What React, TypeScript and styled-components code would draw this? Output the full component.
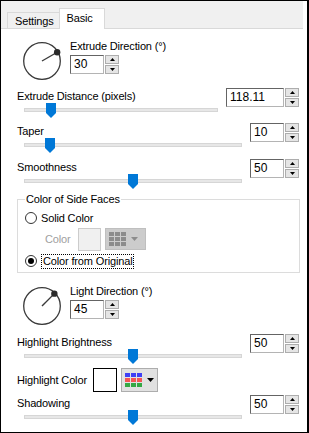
import React from 'react';
import styled, { createGlobalStyle } from 'styled-components';

const GlobalStyle = createGlobalStyle`
  html, body {
    margin: 0;
    padding: 0;
    background: #fff;
  }
  body {
    font-family: 'Liberation Sans', Arial, sans-serif;
    font-size: 11px;
    letter-spacing: -0.15px;
    color: #000;
  }
`;

const Window = styled.div`
  width: 309px;
  height: 433px;
  box-sizing: border-box;
  border: 1px solid #000;
  border-right-width: 2px;
  background: #fff;
  display: flex;
  flex-direction: column;
  overflow: hidden;
`;

const TabStrip = styled.div`
  height: 27px;
  margin-right: 4px;
  padding-left: 6px;
  background: #f0f0f0;
  border-bottom: 1px solid #d9d9d9;
  display: flex;
  align-items: flex-end;
`;

const Tab = styled.div<{ $active?: boolean }>`
  box-sizing: border-box;
  height: ${(p) => (p.$active ? 21 : 16)}px;
  margin-bottom: ${(p) => (p.$active ? -1 : 0)}px;
  padding: ${(p) => (p.$active ? '3px 11px 0 7px' : '2px 5px 0 7px')};
  background: ${(p) => (p.$active ? '#fff' : '#f0f0f0')};
  border: 1px solid #d9d9d9;
  border-bottom: none;
  border-right: ${(p) => (p.$active ? '1px solid #d9d9d9' : 'none')};
  line-height: 13px;
`;

const Panel = styled.div`
  flex: 1;
  display: flex;
  flex-direction: column;
  padding: 10px 8px 0 16px;
`;

const DialRow = styled.div<{ $top?: number }>`
  display: flex;
  align-items: flex-start;
  gap: 8px;
  margin-top: ${(p) => p.$top ?? 0}px;
`;

const DialSvg = styled.svg`
  margin: 2px 0 0 5px;
  flex: none;
`;

const DialColumn = styled.div`
  display: flex;
  flex-direction: column;
  gap: 2px;
`;

const Label = styled.div<{ $muted?: boolean }>`
  line-height: 14px;
  white-space: nowrap;
  color: ${(p) => (p.$muted ? '#a0a0a0' : '#000')};
`;

const ParamGrid = styled.div<{ $top?: number }>`
  display: grid;
  grid-template-columns: 1fr auto;
  grid-template-rows: 15px 16px;
  column-gap: 8px;
  margin-top: ${(p) => p.$top ?? 0}px;

  ${Label} {
    padding-top: 1px;
  }
`;

const SpinCell = styled.div`
  grid-column: 2;
  grid-row: 1 / 3;
  align-self: start;
`;

const SpinWrap = styled.div`
  display: flex;
  gap: 1px;
  height: 19px;
`;

const SpinField = styled.div<{ $w: number }>`
  width: ${(p) => p.$w}px;
  box-sizing: border-box;
  height: 19px;
  border: 1px solid #b4b4b4;
  border-top-color: #646464;
  border-left-color: #646464;
  background: #fff;
  padding: 0 3px;
  line-height: 17px;
  font-size: 12px;
  letter-spacing: 0;
`;

const SpinButtons = styled.div`
  width: 14px;
  display: flex;
  flex-direction: column;
  gap: 1px;
`;

const SpinBtn = styled.div`
  flex: 1;
  box-sizing: border-box;
  border: 1px solid #adadad;
  background: #e5e5e5;
  display: flex;
  align-items: center;
  justify-content: center;
`;

const SliderBox = styled.div`
  grid-column: 1;
  grid-row: 2;
  position: relative;
  margin-left: 7px;
  height: 16px;
`;

const Track = styled.div`
  margin-top: 5px;
  height: 4px;
  box-sizing: border-box;
  background: #e7e7e7;
  border: 1px solid #d6d6d6;
`;

const Thumb = styled.svg`
  position: absolute;
  top: 0;
`;

const Group = styled.fieldset`
  margin: 2px -1px 0 0;
  border: 1px solid #dcdcdc;
  padding: 5px 0 3px 7px;
  min-width: 0;
  display: flex;
  flex-direction: column;
`;

const Legend = styled.legend`
  padding: 0 1px;
  line-height: 14px;
`;

const RadioRow = styled.div<{ $top?: number; $h: number }>`
  display: flex;
  align-items: center;
  gap: 4px;
  height: ${(p) => p.$h}px;
  margin-top: ${(p) => p.$top ?? 0}px;
`;

const RadioDot = styled.span<{ $checked?: boolean }>`
  width: 12px;
  height: 12px;
  box-sizing: border-box;
  border-radius: 50%;
  border: 1px solid #333;
  background: #fff;
  display: flex;
  align-items: center;
  justify-content: center;

  &::after {
    content: '';
    width: 6px;
    height: 6px;
    border-radius: 50%;
    background: ${(p) => (p.$checked ? '#000' : 'transparent')};
  }
`;

const FocusText = styled.span`
  border: 1px dotted #000;
  padding: 0 1px;
  line-height: 13px;
`;

const ColorRow = styled.div`
  display: flex;
  align-items: center;
  height: 22px;
  margin-top: 3px;
  padding-left: 20px;
`;

const Swatch = styled.div<{ $size: number; $border: string; $bg: string; $gap: number }>`
  width: ${(p) => p.$size}px;
  height: ${(p) => p.$size}px;
  box-sizing: border-box;
  margin-left: ${(p) => p.$gap}px;
  border: 1px solid ${(p) => p.$border};
  background: ${(p) => p.$bg};
`;

const PickerButton = styled.div<{ $disabled?: boolean; $w: number; $h: number }>`
  width: ${(p) => p.$w}px;
  height: ${(p) => p.$h}px;
  box-sizing: border-box;
  margin-left: 4px;
  padding-left: 3px;
  display: flex;
  align-items: center;
  gap: 5px;
  background: ${(p) => (p.$disabled ? '#cccccc' : '#e1e1e1')};
  border: 1px solid ${(p) => (p.$disabled ? '#bfbfbf' : '#adadad')};
`;

const HighlightRow = styled.div`
  display: flex;
  align-items: center;
  height: 24px;
  margin-top: 3px;
`;

function Dial({ angle }: { angle: number }) {
  const rad = (angle * Math.PI) / 180;
  const kx = 20 + 17.5 * Math.cos(rad);
  const ky = 20 - 17.5 * Math.sin(rad);
  return (
    <DialSvg width={40} height={40} viewBox='0 0 40 40'>
      <circle cx={20} cy={20} r={18.3} fill='none' stroke='#3a3a3a' strokeWidth={1.3} />
      <line x1={20} y1={20} x2={kx} y2={ky} stroke='#3a3a3a' strokeWidth={1.4} />
      <circle cx={kx} cy={ky} r={3.2} fill='#2a2a2a' />
    </DialSvg>
  );
}

function Spin({ value, width }: { value: string; width: number }) {
  return (
    <SpinWrap>
      <SpinField $w={width}>{value}</SpinField>
      <SpinButtons>
        <SpinBtn>
          <svg width='5' height='3' viewBox='0 0 5 3'>
            <path d='M2.5 0 L5 3 L0 3 Z' fill='#000' />
          </svg>
        </SpinBtn>
        <SpinBtn>
          <svg width='5' height='3' viewBox='0 0 5 3'>
            <path d='M0 0 L5 0 L2.5 3 Z' fill='#000' />
          </svg>
        </SpinBtn>
      </SpinButtons>
    </SpinWrap>
  );
}

function Param({ label, value, width = 34, frac, top }: { label: string; value: string; width?: number; frac: number; top?: number }) {
  return (
    <ParamGrid $top={top}>
      <Label>{label}</Label>
      <SpinCell>
        <Spin value={value} width={width} />
      </SpinCell>
      <SliderBox>
        <Track />
        <Thumb width={10} height={15} viewBox='0 0 10 15' style={{ left: `calc(${frac} * (100% - 10px))` }}>
          <path d='M0 0 H10 V10 L5 15 L0 10 Z' fill='#0078d7' />
        </Thumb>
      </SliderBox>
    </ParamGrid>
  );
}

function GridIcon({ disabled }: { disabled?: boolean }) {
  const rows = disabled ? ['#8c8c8c', '#8c8c8c', '#8c8c8c'] : ['#3f3ff5', '#f55454', '#35a845'];
  return (
    <svg width='17' height='14' viewBox='0 0 17 14'>
      {rows.map((c, r) => [0, 6, 12].map((x) => <rect key={`${r}-${x}`} x={x} y={r * 5} width={5} height={4} fill={c} />))}
    </svg>
  );
}

function Arrow({ color }: { color: string }) {
  return (
    <svg width='7' height='4' viewBox='0 0 7 4'>
      <path d='M0 0 H7 L3.5 4 Z' fill={color} />
    </svg>
  );
}

export default function App() {
  return (
    <>
      <GlobalStyle />
      <Window>
        <TabStrip>
          <Tab>Settings</Tab>
          <Tab $active>Basic</Tab>
        </TabStrip>
        <Panel>
          <DialRow>
            <Dial angle={30} />
            <DialColumn>
              <Label>Extrude Direction (°)</Label>
              <Spin value='30' width={34} />
            </DialColumn>
          </DialRow>

          <Param label='Extrude Distance (pixels)' value='118.11' width={58} frac={0.12} top={7} />
          <Param label='Taper' value='10' frac={0.1} top={4} />
          <Param label='Smoothness' value='50' frac={0.5} top={5} />

          <Group>
            <Legend>Color of Side Faces</Legend>
            <RadioRow $h={14}>
              <RadioDot />
              <span>Solid Color</span>
            </RadioRow>
            <ColorRow>
              <Label $muted>Color</Label>
              <Swatch $size={23} $gap={7} $border='#cccccc' $bg='#f0f0f0' />
              <PickerButton $disabled $w={41} $h={22}>
                <GridIcon disabled />
                <Arrow color='#8c8c8c' />
              </PickerButton>
            </ColorRow>
            <RadioRow $h={16} $top={3}>
              <RadioDot $checked />
              <FocusText>Color from Original</FocusText>
            </RadioRow>
          </Group>

          <DialRow $top={11}>
            <Dial angle={45} />
            <DialColumn>
              <Label>Light Direction (°)</Label>
              <Spin value='45' width={34} />
            </DialColumn>
          </DialRow>

          <Param label='Highlight Brightness' value='50' frac={0.5} top={8} />
          <HighlightRow>
            <Label>Highlight Color</Label>
            <Swatch $size={24} $gap={6} $border='#000' $bg='#fff' />
            <PickerButton $w={37} $h={24}>
              <GridIcon />
              <Arrow color='#000' />
            </PickerButton>
          </HighlightRow>
          <Param label='Shadowing' value='50' frac={0.5} top={3} />
        </Panel>
      </Window>
    </>
  );
}
